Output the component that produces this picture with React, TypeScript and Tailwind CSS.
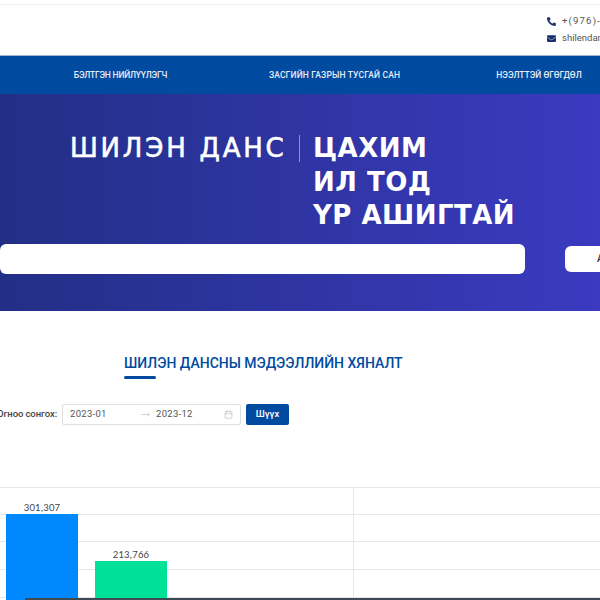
import { FaPhoneAlt, FaEnvelope } from "react-icons/fa";
import { Calendar, MoveRight } from "lucide-react";

const navItems = [
  { label: "БЭЛТГЭН НИЙЛҮҮЛЭГЧ", w: "w-[195px]", track: "tracking-[-0.2px]" },
  { label: "ЗАСГИЙН ГАЗРЫН ТУСГАЙ САН", w: "w-[233px]", track: "tracking-[0.15px]" },
  { label: "НЭЭЛТТЭЙ ӨГӨГДӨЛ", w: "w-[176px]", track: "tracking-[0px]" },
];

function Chart() {
  return (
    <svg width="600" height="113" className="block">
      {[0, 27, 54, 82, 110].map((y) => (
        <line key={y} x1="0" x2="600" y1={y + 0.5} y2={y + 0.5} stroke="#e6e6e6" />
      ))}
      <line x1="353.5" x2="353.5" y1="0" y2="113" stroke="#e6e6e6" />
      <rect x="6" y="27" width="72" height="86" fill="#0088fe" />
      <rect x="95" y="74" width="72" height="39" fill="#00e096" />
      <line x1="25" x2="600" y1="112" y2="112" stroke="#3d4a55" strokeWidth="2" />
      <text x="42" y="24" textAnchor="middle" fontSize="9.5" letterSpacing="0.2" fill="#444" fontFamily="Lato, sans-serif">301,307</text>
      <text x="131" y="71" textAnchor="middle" fontSize="9.5" letterSpacing="0.2" fill="#444" fontFamily="Lato, sans-serif">213,766</text>
    </svg>
  );
}

export default function App() {
  return (
    <div className="w-[600px] h-[600px] overflow-hidden bg-white pt-[4px] font-['Roboto',sans-serif]">
      {/* top contact bar */}
      <div className="h-[52px] border-t border-b border-t-[#eeeeee] border-b-[#9fb4cc] flex justify-end overflow-hidden">
        <div className="w-[53px] shrink-0 pt-[11px] text-[9.5px] text-[#555555] whitespace-nowrap flex flex-col gap-[7px]">
          <div className="flex items-center gap-[6px] h-[10px]">
            <FaPhoneAlt size={9} className="text-[#1a2f6b] shrink-0" />
            <span className="tracking-[1.2px]">+(976)-11</span>
          </div>
          <div className="flex items-center gap-[6px] h-[10px]">
            <FaEnvelope size={9} className="text-[#1a2f6b] shrink-0" />
            <span>shilendans.gov.mn</span>
          </div>
        </div>
      </div>

      {/* nav */}
      <nav className="h-[38px] bg-[#004aa0] flex items-center pl-[23px] text-[8.5px] font-medium text-[#e6edf7]">
        {navItems.map((n) => (
          <div key={n.label} className={`${n.w} ${n.track} shrink-0 text-center whitespace-nowrap`}>
            {n.label}
          </div>
        ))}
      </nav>

      {/* hero */}
      <section className="h-[217px] bg-gradient-to-r from-[#222f86] to-[#3b3ac0] flex flex-col overflow-hidden">
        <div className="flex pl-[70px] pt-[38px] text-white font-['DejaVu_Sans',sans-serif] leading-[33.5px] text-[26px] whitespace-nowrap">
          <div className="font-normal w-[230px] h-[34px] flex justify-between">
            <span className="tracking-[2.8px] [-webkit-text-stroke:0.6px_white]">ШИЛЭН ДАНС</span>
            <span className="w-px h-[27px] bg-[#8a90d8] mt-[3px]" />
          </div>
          <div className="font-bold pl-[13px] tracking-[0.5px]">
            <div>ЦАХИМ</div>
            <div>ИЛ ТОД</div>
            <div>ҮР АШИГТАЙ</div>
          </div>
        </div>
        <div className="flex mt-[11px] items-center">
          <div className="w-[525px] h-[30px] bg-white rounded-[6px] shrink-0" />
          <div className="w-[60px] h-[26px] ml-[40px] bg-white rounded-[6px] shrink-0 text-[10px] font-medium text-[#333333] pl-[32px] leading-[26px]">
            Авах
          </div>
        </div>
      </section>

      {/* title */}
      <div className="pl-[124px] pt-[43px]">
        <h2 className="text-[14px] leading-[18px] font-medium text-[#004aa0] whitespace-nowrap">
          ШИЛЭН ДАНСНЫ МЭДЭЭЛЛИЙН ХЯНАЛТ
        </h2>
        <div className="w-[32px] h-[3px] bg-[#004aa0] rounded-full mt-[4px]" />
      </div>

      {/* date filter */}
      <div className="flex items-center h-[21px] mt-[25px] text-[9.5px] -ml-[3px]">
        <span className="w-[65px] shrink-0 font-medium text-[#444444] whitespace-nowrap tracking-[-0.1px]">Огноо сонгох:</span>
        <div className="w-[179px] h-[21px] border border-[#e0e0e0] rounded-[2px] flex items-center pl-[7px] text-[#555555] text-[9.5px] tracking-[0.3px]">
          <span className="w-[71px]">2023-01</span>
          <MoveRight size={9} className="text-[#c4c4c4] w-[9px]" />
          <span className="ml-[6px] w-[68px]">2023-12</span>
          <Calendar size={9} className="text-[#c4c4c4]" />
        </div>
        <button className="ml-[5px] w-[43px] h-[21px] bg-[#004aa0] rounded-[2px] text-white text-[9.5px] font-medium">
          Шүүх
        </button>
      </div>

      <div className="mt-[62px]">
        <Chart />
      </div>
    </div>
  );
}
